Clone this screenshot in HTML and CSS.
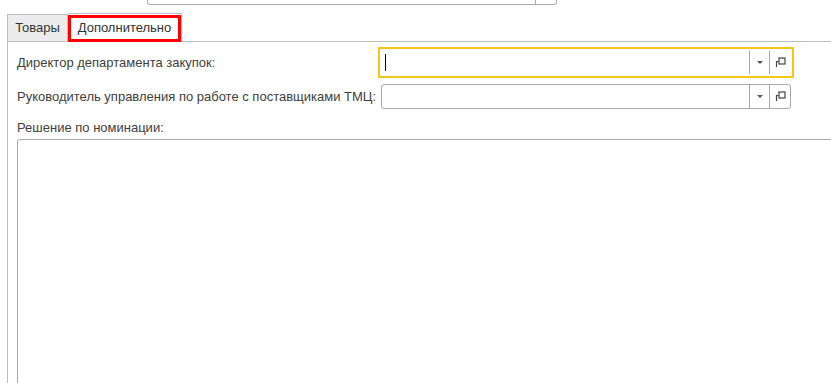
FILE: index.html
```html
<!DOCTYPE html>
<html lang="ru">
<head>
  <meta charset="UTF-8" />
  <title>Дополнительно</title>
  <link rel="stylesheet" href="styles.css">
</head>
<body>
  <!-- поле сверху, видна только нижняя кромка -->
  <div class="top-field">
    <span class="top-field-input"></span>
    <span class="top-field-btn"></span>
  </div>

  <div class="tabs">
    <div class="tab">Товары</div>
    <div class="tab tab-active">Дополнительно</div>
  </div>

  <div class="panel">
    <div class="form">
      <div class="label">Директор департамента закупок:</div>
      <div class="field field-focus">
        <span class="field-input"><span class="caret"></span></span>
        <span class="field-btn"><i class="arrow"></i></span>
        <span class="field-btn">
          <svg width="11" height="11" viewBox="0 0 11 11"><path d="M1.5 10V4.5H3.5" fill="none" stroke="#444" stroke-width="1.2"/><rect x="4" y="1" width="6" height="6" fill="none" stroke="#444" stroke-width="1.2"/></svg>
        </span>
      </div>

      <div class="label">Руководитель управления по работе с поставщиками ТМЦ:</div>
      <div class="field">
        <span class="field-input"></span>
        <span class="field-btn"><i class="arrow"></i></span>
        <span class="field-btn">
          <svg width="11" height="11" viewBox="0 0 11 11"><path d="M1.5 10V4.5H3.5" fill="none" stroke="#444" stroke-width="1.2"/><rect x="4" y="1" width="6" height="6" fill="none" stroke="#444" stroke-width="1.2"/></svg>
        </span>
      </div>
    </div>

    <div class="label label-block">Решение по номинации:</div>
    <div class="memo"></div>
  </div>
</body>
</html>
```

FILE: styles.css
```css
body {
  margin: 0;
  font-family: "Liberation Sans", Arial, sans-serif;
  font-size: 13px;
  color: #404040;
  background: #fff;
  overflow: hidden;
}
.top-field {
  display: flex;
  box-sizing: border-box;
  width: 410px;
  height: 25px;
  margin: -20px 0 0 147px;
  border: 1px solid #a8a8a8;
  border-radius: 3px;
}
.top-field-input {
  flex: 1;
}
.top-field-btn {
  width: 20px;
  border-left: 1px solid #a8a8a8;
}
.tabs {
  display: flex;
  align-items: flex-end;
  margin-left: 7px;
  margin-top: 8px;
}
.tab {
  box-sizing: border-box;
  width: 61px;
  height: 27px;
  padding-top: 5px;
  border: 1px solid #bdbdbd;
  border-bottom: none;
  background: #ececec;
  color: #333;
  text-align: center;
  white-space: nowrap;
}
.tab-active {
  position: relative;
  width: 114px;
  height: 29px;
  margin-bottom: -1px;
  padding-top: 6px;
  background: #fff;
  border-left: none;
}
.tab-active::after {
  content: "";
  position: absolute;
  left: 0;
  top: 1px;
  right: 0;
  bottom: 0;
  border: 3px solid #f00;
}
.panel {
  margin-left: 7px;
  padding: 8px 0 0 9px;
  border-top: 1px solid #bdbdbd;
  border-left: 1px solid #bdbdbd;
}
.form {
  display: grid;
  grid-template-columns: 364px 410px;
  row-gap: 9px;
  align-items: center;
}
.label {
  line-height: 16px;
  white-space: nowrap;
}
.label-block {
  margin-top: 11px;
}
.field {
  display: flex;
  box-sizing: border-box;
  height: 25px;
  border: 1px solid #a8a8a8;
  border-radius: 3px;
}
.field-focus {
  border-color: #fff;
  border-radius: 0;
  outline: 2px solid #f5c518;
  outline-offset: 1px;
}
.field-input {
  flex: 1;
  padding: 3px 0 0 3px;
}
.caret {
  display: block;
  width: 1px;
  height: 17px;
  background: #000;
}
.field-btn {
  display: flex;
  align-items: center;
  justify-content: center;
  box-sizing: border-box;
  width: 20px;
  border-left: 1px solid #a8a8a8;
}
.field-btn + .field-btn {
  width: 21px;
}
.arrow {
  width: 0;
  height: 0;
  border-left: 3px solid transparent;
  border-right: 3px solid transparent;
  border-top: 3px solid #555;
}
.memo {
  height: 260px;
  margin: 3px -12px 0 0;
  border: 1px solid #a8a8a8;
  border-radius: 3px;
}
```
